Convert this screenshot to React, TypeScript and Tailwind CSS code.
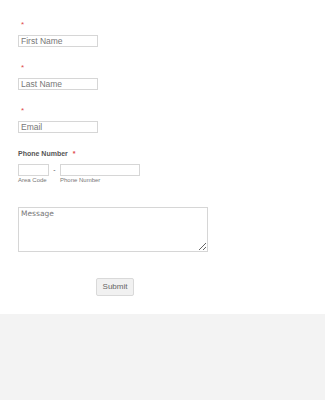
import React from 'react';

const inputCls =
  'block h-[12px] border border-[#d6d6d6] bg-white px-[2px] text-[8.5px] leading-[10px] text-[#555] placeholder:text-[#777] outline-none';

const Req: React.FC = () => <div className="h-[10px] pl-[3px] text-[8px] leading-[10px] text-[#e0474c]">*</div>;

const App: React.FC = () => {
  return (
    <div className="min-h-[400px] flex flex-col bg-[#f3f3f3] font-['Liberation_Sans',Arial,sans-serif]">
      <div className="h-[314px] bg-white px-[18px] pt-[20px]">
        {['First Name', 'Last Name', 'Email'].map((p) => (
          <div key={p} className="mb-[16px]">
            <Req />
            <input className={`${inputCls} mt-[5px] w-[80px]`} placeholder={p} />
          </div>
        ))}

        <div className="mb-[23px]">
          <div className="h-[10px] text-[7px] font-bold leading-[10px] text-[#555]">
            Phone Number <span className="ml-[3px] text-[#e0474c]">*</span>
          </div>
          <div className="mt-[5px] flex items-start">
            <div>
              <input className={`${inputCls} w-[31px]`} />
              <div className="mt-[1px] text-[6px] leading-[7px] text-[#777]">Area Code</div>
            </div>
            <div className="w-[11px] pt-[2px] text-center text-[7px] leading-[8px] text-[#555]">-</div>
            <div>
              <input className={`${inputCls} w-[80px]`} />
              <div className="mt-[1px] text-[6px] leading-[7px] text-[#777]">Phone Number</div>
            </div>
          </div>
        </div>

        <textarea
          className="block h-[45px] w-[190px] resize-y border border-[#d6d6d6] px-[2px] py-[1px] font-['DejaVu_Sans',Verdana,sans-serif] text-[7.5px] leading-[10px] text-[#555] placeholder:text-[#777] outline-none"
          placeholder="Message"
        />

        <div className="mt-[26px] pl-[78px]">
          <button className="block h-[18px] w-[38px] rounded-[2px] border border-[#d9d9d9] bg-[#f1f1f1] text-[8px] leading-[16px] text-[#666]">
            Submit
          </button>
        </div>
      </div>
      <div className="flex-1" />
    </div>
  );
};

export default App;
